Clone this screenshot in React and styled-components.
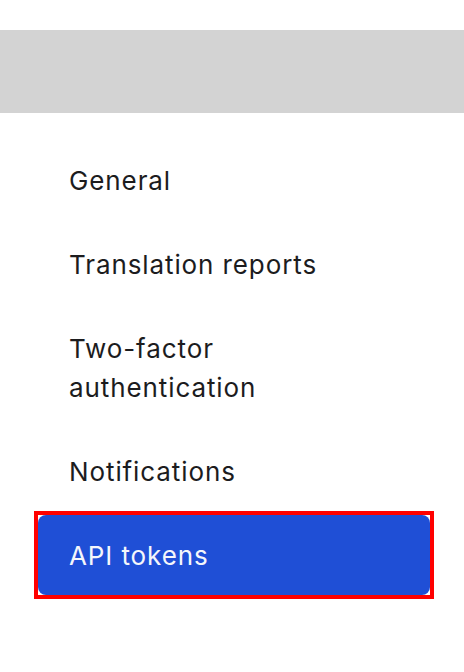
import React from 'react'
import styled, { createGlobalStyle } from 'styled-components'

const items = [
    { key: 'general', label: 'General' },
    { key: 'reports', label: 'Translation reports' },
    { key: 'twofactor', label: 'Two-factor authentication' },
    { key: 'notifications', label: 'Notifications' },
    { key: 'tokens', label: 'API tokens', active: true },
]

export default function App() {
    return (
        <>
            <GlobalStyle />
            <Page>
                <Banner />
                <Nav>
                    {items.map(({ key, label, active }) =>
                        <NavItem key={key} $active={active}>
                            <Label>{label}</Label>
                        </NavItem>
                    )}
                </Nav>
            </Page>
        </>
    )
}

const
    GlobalStyle = createGlobalStyle`
        * { box-sizing: border-box; }
        html, body {
            margin: 0;
            padding: 0;
            background: #fff;
        }
        body {
            font-family: Inter, "Noto Sans", sans-serif;
            -webkit-font-smoothing: antialiased;
        }
    `,
    Page = styled.div`
        width: 464px;
        min-height: 672px;
        padding-top: 30px;
        background: #fff;
    `,
    Banner = styled.div`
        height: 83px;
        background: #d3d3d3;
    `,
    Nav = styled.nav`
        display: flex;
        flex-direction: column;
        gap: 4px;
        padding: 27px 34px 0 38px;
    `,
    NavItem = styled.a`
        position: relative;
        display: block;
        padding: 20.5px 31px;
        border-radius: 8px;
        color: ${p => p.$active ? '#f4f6fb' : '#1c1c1e'};
        background: ${p => p.$active ? '#1f4fd6' : 'transparent'};
        cursor: pointer;
        text-decoration: none;
        &::after {
            content: '';
            display: ${p => p.$active ? 'block' : 'none'};
            position: absolute;
            inset: -4px;
            border: 4px solid #ff0000;
            pointer-events: none;
        }
    `,
    Label = styled.span`
        display: block;
        max-width: 300px;
        font-size: 26px;
        line-height: 39px;
        font-weight: 400;
        letter-spacing: 0.9px;
    `
